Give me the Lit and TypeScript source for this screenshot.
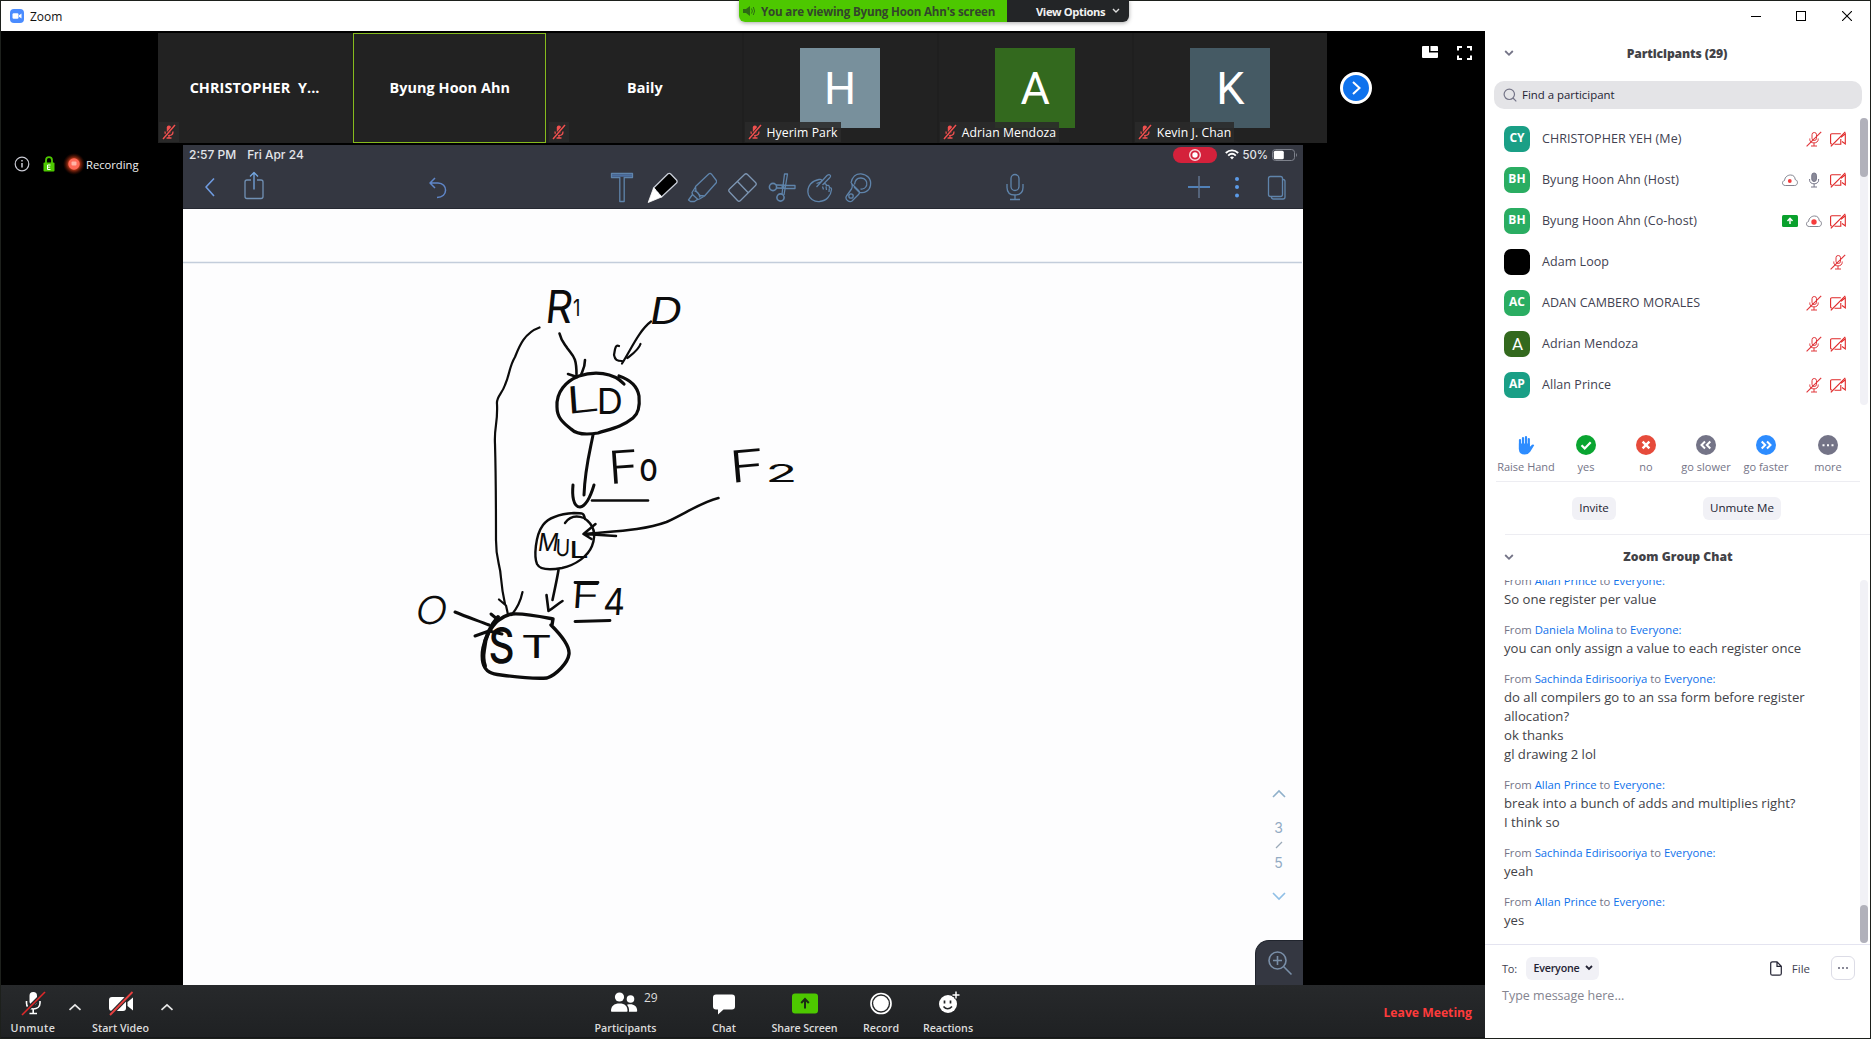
import { LitElement, html, css, svg, nothing } from "lit";
import { customElement } from "lit/decorators.js";

interface Person { name: string; tag: string; color: string; icons: string[]; plain?: boolean }
interface Message { from: string; lines: string[] }
interface Tile { label?: string; letter?: string; name?: string; color?: string; muted: boolean; active?: boolean }

const TILES: Tile[] = [
  { label: "CHRISTOPHER  Y...", muted: true },
  { label: "Byung Hoon Ahn", muted: false, active: true },
  { label: "Baily", muted: true },
  { letter: "H", name: "Hyerim Park", color: "slate", muted: true },
  { letter: "A", name: "Adrian Mendoza", color: "forest", muted: true },
  { letter: "K", name: "Kevin J. Chan", color: "steel", muted: true },
];

const PEOPLE: Person[] = [
  { name: "CHRISTOPHER YEH (Me)", tag: "CY", color: "teal", icons: ["mic", "cam"] },
  { name: "Byung Hoon Ahn (Host)", tag: "BH", color: "green", icons: ["cloud", "micOn", "cam"] },
  { name: "Byung Hoon Ahn (Co-host)", tag: "BH", color: "green", icons: ["share", "cloudBig", "cam"] },
  { name: "Adam Loop", tag: "", color: "black", icons: ["mic"] },
  { name: "ADAN CAMBERO MORALES", tag: "AC", color: "green", icons: ["mic", "cam"] },
  { name: "Adrian Mendoza", tag: "A", color: "forest", icons: ["mic", "cam"], plain: true },
  { name: "Allan Prince", tag: "AP", color: "teal", icons: ["mic", "cam"] },
];

const MESSAGES: Message[] = [
  { from: "Allan Prince", lines: ["So one register per value"] },
  { from: "Daniela Molina", lines: ["you can only assign a value to each register once"] },
  { from: "Sachinda Edirisooriya", lines: ["do all compilers go to an ssa form before register", "allocation?", "ok thanks", "gl drawing 2 lol"] },
  { from: "Allan Prince", lines: ["break into a bunch of adds and multiplies right?", "I think so"] },
  { from: "Sachinda Edirisooriya", lines: ["yeah"] },
  { from: "Allan Prince", lines: ["yes"] },
];

const icon16 = (body: unknown) => html`<svg width="16" height="16" viewBox="0 0 16 16" fill="none">${body}</svg>`;

const STATUS: Record<string, unknown> = {
  mic: icon16(svg`<g stroke="#e0363b" stroke-width="1"><rect x="6" y="1.5" width="4.5" height="8" rx="2.2"/><path d="M3.800 7.500v1c0 2 1.800 3.400 4.200 3.400s4.200-1.400 4.200-3.400v-1M8 12v3M5 15h6"/><path d="M.6 15.400 15.200.8" stroke-width="1.200"/></g>`),
  micOn: icon16(svg`<g stroke="#747487" stroke-width="1"><rect x="5.800" y="1" width="4.600" height="8.500" rx="2.300" fill="#8a8a98"/><path d="M3.600 7v1.200c0 2.200 1.900 3.600 4.500 3.600s4.500-1.400 4.500-3.600V7M8.100 12v3M5 15h6"/></g>`),
  cam: icon16(svg`<g stroke="#e02828" stroke-width="1.100"><path d="M10.800 2.800H1.800Q.6 2.800.6 4v8q0 1 1 1h.5M4.500 13.200h6.300V8M11 6.300l4.300-3.500v10.200L12 10.500"/><path d="M.8 15.400 15.300.8" stroke-width="1.200"/></g>`),
  cloud: icon16(svg`<path d="M3.300 13.500C-.4 13.500-.2 9 2.500 8.500 3 4.500 6 3 8.700 3c2.800 0 4.400 2 4.500 4.600 3.200.6 2.900 5.900-.5 5.900z" stroke="#84848f"/><circle cx="7.800" cy="9" r="1.900" fill="#f53b3b"/>`),
  cloudBig: icon16(svg`<path d="M3.300 13.500C-.4 13.500-.2 9 2.500 8.500 3 4.500 6 3 8.700 3c2.800 0 4.400 2 4.500 4.600 3.200.6 2.900 5.900-.5 5.900z" stroke="#84848f"/><circle cx="8" cy="9" r="2.700" fill="#f53b3b"/>`),
  share: icon16(svg`<rect y="2" width="16" height="12" rx="1.500" fill="#0aa12d"/><path d="M8 11V5.500M5.500 8 8 5.300 10.500 8" stroke="#fff" stroke-width="1.500"/>`),
};

const redMic = html`<svg width="14" height="16" viewBox="0 0 14 16" fill="none"><rect x="4.800" y="1.500" width="4.200" height="8" rx="2" fill="#f0504f"/><path d="M3 7.500c0 2.600 1.600 4 4 4s4-1.400 4-4M7 11.500V14M4.500 14h5" stroke="#f0504f" stroke-width="1.300"/><path d="M1 15 13 1" stroke="#262626" stroke-width="3"/><path d="M1 15 13 1" stroke="#f0504f" stroke-width="1.500"/></svg>`;

const chevron = html`<svg width="10" height="8" viewBox="0 0 10 8" fill="none"><path d="M1.200 2 5 5.800 8.800 2" stroke="#747487" stroke-width="1.800"/></svg>`;

const tool = (body: unknown) => html`<svg width="32" height="32" viewBox="0 0 32 32" fill="none" stroke="#5f84ab" stroke-width="1.300" stroke-linejoin="round">${body}</svg>`;

const TOOLS = {
  back: tool(svg`<path d="M20 7.500 12 16l8 9" stroke="#6f9be0" stroke-width="1.600"/>`),
  share: tool(svg`<path d="M13 9H9q-2 0-2 2v14.500q0 2 2 2h14q2 0 2-2V11q0-2-2-2h-4" stroke="#7090b4"/><path d="M16 18.500V2M12 5.500l4-4 4 4" stroke="#74a6e0"/>`),
  undo: tool(svg`<path d="M13 7 8 12l5 5M8.500 12h7.500c10 0 10.500 14.500-1 14.500" stroke="#5f86c8" stroke-width="1.500"/>`),
  text: tool(svg`<path d="M5.500 2.500h21v4h-8.300v24h-4.400v-24H5.500z"/><path d="M6 4.500h20" stroke="#4d6fa0" stroke-width="2.500"/>`),
  pen: tool(svg`<path d="M22 2.800 7.500 17l8 9 15-14q1.200-1.500 0-3L25 3.200q-1.500-1.500-3-.4z" fill="#000" stroke="#c9ced8"/><path d="M7.500 17 2.200 31.500 15.500 26q-1-2.500-3-2.500.3-2.500-2.500-3-.200-3-2.500-3.500z" fill="#fff" stroke="#fff" stroke-width=".8"/>`),
  marker: tool(svg`<path d="M24 2.800 10.500 15.500l.5 4.500 4 4.500 4.500.5L31 12q1.200-1.500 0-3l-4.500-5.800q-1.500-1.500-2.500-.4zM10.500 16 7 21.500l.5 2 5.500 5 1.500-.5 5-3M7.500 23.500 3.500 29l2 1.500h4l3.500-2.500M9.500 20q4 .5 5.500 6.500"/>`),
  eraser: tool(svg`<path d="M19.500 3.500q1.500-1.500 3 0l8 8q1.500 1.500 0 3L15.500 29.500q-1.500 1.500-3 0l-8-8.500q-1.500-1.500 0-3zM12.500 10.500 23.500 22" stroke="#7d96b3"/>`),
  scissors: tool(svg`<g transform="translate(2.500 0)"><circle cx="6.500" cy="16" r="3.600" stroke-width="1.600"/><circle cx="14" cy="26.500" r="3.600" stroke-width="1.600"/><path d="m9.500 14 19 .5v3l-19-.5M15.500 23l2.500-20h3L17.500 24"/><circle cx="16.500" cy="16" r="1"/></g>`),
  hand: tool(svg`<path d="M12.500 16 23 4.500q2.500-2 3.500.2.300 1-.8 2L18.500 14M19 13.500q1.800-1.700 3.200.2l.3 1q2-1 2.800.8l.2 1.200q2-.2 2 1.800-.5 5-3.500 8-3 3.500-8.500 4-8 .5-11-6.500-2-6 2-11Q9.500 9.500 15 8.500q3-.5 2.500 1.500-.5 1-5 2.500M18.500 15.500l1 3M22 15.500l.5 3.500M25.300 17.500 25 21"/>`),
  lasso: tool(svg`<path d="M8 12C9 6 13 2.500 18 2.800c6 .5 10.500 5 9.500 11.500-1 5.500-6 8.500-11.500 7M11.500 13.500C12 9.500 14.500 6.800 18 7c4.500.3 6.500 3.500 5.700 7-.8 3-3.500 4.500-6.200 3.800"/><path d="m8.500 12.500 7 7q2 2 0 4L9 30q-2 1.500-4.500-.5t-1-4.500l5-7q1.500-3 0-5.500z"/><circle cx="8" cy="25" r="2.200"/><path d="m11 16 5 5"/>`),
  mic: tool(svg`<rect x="12" y="3.500" width="8" height="16" rx="4"/><path d="M8 13v3.500c0 5 3 7.500 8 7.500s8-2.500 8-7.500V13M16 24v4.500M11 28.500h10"/>`),
  plus: tool(svg`<path d="M5 16h22" stroke="#5b9be0" stroke-width="1.500"/><path d="M16 5v22" stroke="#61748f" stroke-width="1.500"/>`),
  dots: tool(svg`<g fill="#5b9be8" stroke="none"><circle cx="16" cy="8" r="2"/><circle cx="16" cy="16" r="2"/><circle cx="16" cy="24.500" r="2"/></g>`),
  pages: tool(svg`<rect x="9.500" y="5.500" width="14" height="20" rx="2"/><path d="M24 8.500q2 0 2 2V26q0 2-2 2h-9.500q-2 0-2-2"/>`),
};

const caret = html`<svg width="14" height="8" viewBox="0 0 14 8" fill="none"><path d="M1.500 6.800 7 1.800l5.500 5" stroke="#e8e8e8" stroke-width="1.700"/></svg>`;

/* Drawn width and left bearing of each character, in em. */
const METRICS: Record<string, [number, number]> = {
  R: [0.5, 0.09], "1": [0.22, 0.06], D: [0.58, 0.09], L: [0.43, 0.09], F: [0.44, 0.09], "0": [0.52, 0.06], "2": [0.5, 0.05],
  M: [0.7, 0.09], U: [0.56, 0.09], "4": [0.56, 0.04], S: [0.52, 0.06], T: [0.56, 0.04], O: [0.66, 0.06],
};

/* One hand-written character, scaled to the box x, y, w, h on the canvas. */
const ink = (ch: string, x: number, y: number, w: number, h: number, tilt = 0, weight = 300, turn = 0) => {
  const size = h / 0.727;
  const [em, bearing] = METRICS[ch];
  const k = w / (em * size);
  return svg`<text class="ink" font-weight=${weight} font-size=${size.toFixed(1)}
    transform="translate(${(x - bearing * size * k).toFixed(1)} ${y + h}) rotate(${turn}) skewX(${-tilt}) scale(${k.toFixed(3)} 1)">${ch}</text>`;
};

@customElement("app-root")
export class AppRoot extends LitElement {
  static styles = css`
    :host { display: block; width: 1871px; height: 1039px; font-family: "Open Sans", "Noto Sans", sans-serif; color: #424251; overflow: hidden; }
    * { box-sizing: border-box; }
    svg { display: block; flex: none; }
    .window { position: relative; width: 1871px; height: 1039px; border: 1px solid #1d201c; background: #fff; display: flex; flex-direction: column; }
    .title { height: 30px; display: flex; align-items: center; padding-left: 9px; flex: none; }
    .title .name { margin-left: 6px; font-size: 12px; color: #111; flex: 1; }
    .controls { display: flex; gap: 36px; margin-right: 18px; }
    .min { margin-right: -1px; }
    .banner { position: absolute; left: 738px; top: -1px; display: flex; height: 22px; font-weight: 700; box-shadow: 0 1px 4px rgba(0,0,0,.35); border-radius: 0 0 6px 6px; overflow: hidden; line-height: 21px; white-space: nowrap; }
    .viewing { width: 268px; background: #4dc800; color: #33452c; display: flex; align-items: center; padding-left: 4px; gap: 6px; font-size: 11.600px; letter-spacing: -0.180px; }
    .options { width: 122px; background: #232527; color: #f2f2f2; display: flex; align-items: center; padding-left: 29px; gap: 7px; font-size: 11.200px; letter-spacing: -0.400px; }
    .main { display: flex; flex: 1; min-height: 0; }
    .meeting { width: 1484px; background: #000; display: flex; flex-direction: column; }
    .strip { height: 114px; padding: 2px 0 2px 157px; display: flex; flex: none; }
    .tiles { width: 1169px; display: grid; grid-template-columns: repeat(6, 1fr); gap: 2px; background: #1f1f1f; }
    .tile { position: relative; background: #222; display: flex; align-items: center; justify-content: center; height: 110px; }
    .tile.active { outline: 1px solid #86bb1d; outline-offset: -1px; }
    .label { color: #fff; font-size: 14.400px; letter-spacing: .08px; font-weight: 700; white-space: pre; margin-bottom: 1px; }
    .pic { width: 80px; height: 80px; display: flex; align-items: center; justify-content: center; color: #fff; font-family: Roboto, sans-serif; font-size: 45px; }
    .slate { background: #78909c; } .forest { background: #33691e; } .steel { background: #455a64; }
    .teal { background: #1a9f86; } .green { background: #2aad62; } .black { background: #000; }
    .nameplate { position: absolute; left: 1px; bottom: 1px; height: 20px; background: rgba(42,42,42,.88); display: flex; align-items: center; padding: 0 3px; gap: 5px; color: #fff; font-size: 12.200px; letter-spacing: .1px; white-space: nowrap; }
    .next { margin: 39px 0 0 13px; width: 32px; height: 32px; border-radius: 50%; border: 3px solid #fff; background: #0e72ed; display: flex; align-items: center; justify-content: center; flex: none; }
    .viewtools { margin: 13px 13px 0 auto; display: flex; gap: 19px; }
    .stage { display: flex; flex: 1; min-height: 0; }
    .info { width: 182px; padding: 8px 0 0 12px; display: flex; height: 30px; align-items: center; color: #f0f0f0; font-size: 11.200px; }
    .lock { margin-left: 12px; }
    .rec { margin: 0 1px 0 8px; }
    .share { width: 1120px; background: #fdfdfe; display: flex; flex-direction: column; }
    .ipad { height: 64px; background: #343741; border-bottom: 1px solid #262932; display: flex; flex-direction: column; color: #e3e5e9; font-family: Inter, sans-serif; flex: none; }
    .status { height: 19px; display: flex; align-items: center; padding: 0 5px 0 6px; font-size: 12px; font-weight: 500; }
    .status .date { margin-left: 11px; flex: 1; }
    .pill { width: 44px; height: 16px; border-radius: 8px; background: #d4213b; display: flex; align-items: center; justify-content: center; margin-right: 8px; }
    .status .pct { margin: 0 4px 0 4px; font-size: 11.300px; }
    .tools { display: flex; height: 44px; align-items: center; padding: 2px 0 0 11px; }
    .undo { margin-left: 152px; }
    .g1 { display: flex; gap: 12px; }
    .g2 { display: flex; gap: 7.500px; margin-left: 152px; }
    .m { margin-left: 124px; }
    .g3 { display: flex; gap: 6px; margin-left: 152px; }
    .canvas { flex: 1; position: relative; display: flex; }
    .sketch { width: 1070px; height: 776px; overflow: visible; }
    .ink { font-family: Inter, "Open Sans", sans-serif; fill: #0c0c0c; }
    .nav { display: flex; flex-direction: column; width: 51px; align-items: center; color: #93abc4; font-family: Inter, sans-serif; font-size: 14px; line-height: 18px; padding: 580px 0 0 1px; }
    .slash { margin: 4px 0 5px; }
    .up { margin-bottom: 21px; }
    .down { margin-top: 20px; }
    .magnify { position: absolute; right: 0; bottom: 0; width: 48px; height: 45px; border-radius: 14px 0 0 0; background: #343741; border: 1px solid #20242d; border-width: 1px 0 0 1px; padding: 9px 0 0 11px; }
    .bar { height: 53px; background: linear-gradient(#27292b, #1f2123); display: flex; flex: none; color: #dcdcdc; font-size: 10.700px; font-weight: 600; border-bottom: 1px solid #16171a; }
    .btn { display: flex; flex-direction: column; align-items: center; white-space: nowrap; padding-top: 5px; }
    .btn svg { height: 28px; }
    .btn span { line-height: 16px; margin-top: 2px; }
    .w64 { width: 64px; letter-spacing: .45px; } .w71 { width: 71px; } .w80 { width: 80px; } .w60 { width: 60px; } .w50 { width: 50px; }
    .caret { padding-top: 18px; width: 20px; padding-left: 3px; }
    .caret.b { width: 22px; padding-left: 4px; }
    .p { margin-left: 407.500px; } .c { margin-left: 28.500px; } .s { margin-left: 10.500px; letter-spacing: -.12px; } .r { margin-left: 11.500px; } .x { margin-left: 12px; }
    .count { position: relative; margin-right: 3px; }
    .num { position: absolute; left: 34px; top: -1px; font-size: 12px; font-weight: 400; }
    .leave { margin-left: auto; padding-right: 13px; color: #ff3b3b; font-size: 12.200px; font-weight: 700; line-height: 56px; }
    .side { flex: 1; display: flex; flex-direction: column; color: #424251; }
    .head { display: flex; align-items: center; height: 44px; padding: 0 19px; font-size: 12.200px; letter-spacing: -.13px; font-weight: 700; flex: none; color: #424247; }
    .head b { flex: 1; text-align: center; margin-right: 11px; }
    .search { margin: 6px 8px 0 9px; height: 28px; border-radius: 10px; background: #e4e4e7; display: flex; align-items: center; padding: 0 0 1px 9px; gap: 5px; font-size: 11.400px; color: #232333; flex: none; }
    .people { margin-top: 9px; height: 287px; display: flex; flex: none; }
    .rows { flex: 1; }
    .row { height: 41px; display: flex; align-items: center; padding-left: 19px; font-size: 12.500px; letter-spacing: .05px; white-space: nowrap; }
    .pname { margin-bottom: 1px; }
    .ava { width: 26px; height: 26px; border-radius: 7px; color: #fff; font-weight: 700; font-size: 12px; line-height: 1; padding-bottom: 1px; display: flex; align-items: center; justify-content: center; margin-right: 12px; flex: none; }
    .ava.plain { font-weight: 400; font-size: 17px; font-family: Roboto, sans-serif; padding: 2px 0 0 1px; }
    .icons { margin-left: auto; display: flex; gap: 8px; padding-right: 14px; }
    .track { width: 8px; border-radius: 4px; background: #f1f1f6; margin-right: 2px; display: flex; height: 287px; }
    .track.full { height: 363px; }
    .thumb { width: 8px; border-radius: 4px; background: #b1b1bb; }
    .t1 { height: 59px; } .t2 { height: 38px; align-self: flex-end; }
    .feedback { margin: 30px 10px 0 11px; height: 47px; display: flex; border-bottom: 1px solid #ededf2; font-size: 11px; color: #747487; flex: none; }
    .fb { width: 60px; display: flex; flex-direction: column; align-items: center; gap: 4px; white-space: nowrap; line-height: 16px; }
    .fb.more { width: 64px; }
    .acts { display: flex; height: 53px; padding: 15px 0 0 67px; margin-left: 20px; gap: 87px; border-bottom: 1px solid #ededf2; flex: none; }
    .chip { height: 23px; border-radius: 6px; background: #f1f1f6; color: #232333; font-size: 11.600px; line-height: 21px; text-align: center; }
    .inv { width: 44px; } .unm { width: 78px; }
    .head.chat { height: 45px; letter-spacing: 0; padding-bottom: 2px; }
    .head.chat b { margin-right: 9px; }
    .chatbox { height: 363px; display: flex; flex: none; overflow: hidden; }
    .log { flex: 1; height: 363px; display: flex; flex-direction: column; justify-content: flex-end; padding: 0 20px 13px 19px; gap: 11px; white-space: nowrap; }
    .msg { line-height: 19px; font-size: 13.150px; color: #424247; flex: none; }
    .from { font-size: 11.300px; color: #747487; }
    .who-link { color: #0e71eb; }
    .compose { border-top: 1px solid #e4e4f0; margin-top: 1px; flex: 1; padding: 11px 15px 0 17px; font-size: 11.500px; }
    .cline { display: flex; align-items: center; height: 24px; }
    .to { font-size: 11px; letter-spacing: -.2px; }
    .who { margin-left: 9.500px; width: 73px; height: 23px; border-radius: 6px; background: #f1f1f6; font-weight: 600; color: #232333; padding-left: 7px; display: flex; align-items: center; gap: 5px; font-size: 10.700px; letter-spacing: -.2px; }
    .file { margin-left: auto; margin-right: 10px; }
    .dots { margin-left: 21px; width: 24px; height: 24px; border: 1px solid #dcdce6; border-radius: 6px; display: flex; align-items: center; justify-content: center; }
    .ph { color: #84848f; font-size: 12.500px; margin-top: 6px; line-height: 19px; }
  `;

  private tile(t: Tile) {
    return html`<div class="tile ${t.active ? "active" : ""}">
      ${t.label ? html`<span class="label">${t.label}</span>` : html`<div class="pic ${t.color}">${t.letter}</div>`}
      ${t.muted ? html`<div class="nameplate">${redMic}${t.name ? html`<span>${t.name}</span>` : nothing}</div>` : nothing}
    </div>`;
  }

  private sketch() {
    return html`<svg class="sketch" viewBox="183 209 1070 776" fill="none" stroke="#0c0c0c" stroke-width="2.200" stroke-linecap="round" stroke-linejoin="round">
      <path d="M183 262.500H1302" stroke="#c3cddb" stroke-width="1.700" stroke-linecap="butt"/>
      <g stroke="none">
        ${ink("R", 548, 290, 21, 33, 6, 400)}${ink("1", 574, 299, 4, 17, 0, 400)}
        ${ink("D", 652, 297, 26, 27, 10, 400)}
        ${ink("L", 572, 387, 26, 27, 2, 300, -6)}${ink("D", 600, 388, 21, 26, 0, 400)}
        ${ink("F", 614, 451, 23, 33, 0, 300, -4)}${ink("0", 641, 459, 15, 22, 0, 500)}
        ${ink("F", 736, 451, 27, 32, 0, 300, -5)}${ink("2", 768, 464, 26, 18, 0, 400)}
        ${ink("M", 539, 533, 16, 18, 8, 400)}${ink("U", 557, 539, 11, 17, 2, 400)}${ink("L", 572, 541, 15, 17, 0, 400)}
        ${ink("F", 575, 583, 22, 25, 4)}${ink("4", 604, 588, 19, 27, 4, 400)}
        ${ink("S", 491, 627, 21, 36, 0, 500)}${ink("T", 523, 635, 27, 23, 0, 400)}
        ${ink("O", 416, 596, 28, 28, 10)}
      </g>
      <path d="M539.500 327.500C524 333 519 347 515 357c-6 10-5 17-10 28-3 9-9 12-8 19 1 20-3 22-2 40 1 35 1 66 1 96 0 22 4 22 5 38 1 12 2 17 4 26M499 599.500l7 6 2 9M522.500 592c-2 10-6 17-11 23"/>
      <path d="M559.500 333.500c2 8 4 9 8 15 6 8 9 9 9 26M568 374l9 3M585 360c0 7-2 10-4 15" stroke-width="2.600"/>
      <path d="M651 321.500c-12 9-20 28-29 42M619 346c-4-2-4 4-5 9 1 5 3 6 8 6M640.500 344c-2 6-8 10-13 14"/>
      <path d="M619 376c9 3 18 8 20 20 1 10-1 18-6 22-11 9-23 11-35 15-12 2-22 1-27-4-9-7-14-12-14-22-1-15 9-26 22-31 15-5 34-4 45 8" stroke-width="3.200"/>
      <path d="M593 435c-3 16-8 33-9 60M573 485c-1 10 0 22 7 22 7-1 11-12 14-22" stroke-width="3"/>
      <path d="M592 500.500h56" stroke-width="2.600"/>
      <path d="M718.500 498c-17 4-34 16-52 24-22 8-48 9-80 12M584 534l32 2M595.500 524l-12 10 8 5" stroke-width="2.500"/>
      <path d="M585 519c-1-6-2-6-11-6-15 1-25 4-31 12-8 11-9 32-6 39 3 6 14 6 25 4 14-3 26-12 30-22 5-13 1-22-8-28-8-3-14-2-19 5" stroke-width="2.400"/>
      <path d="M558.500 570c-2 12-4 20-6 30M546.500 595l2 16c5-3 9-7 14-10" stroke-width="2.600"/>
      <path d="M575 582.500h23M575 621.500l35-1" stroke-width="2.800"/>
      <path d="M455 612c12 5 24 9 34 13M491 614l6 5M475 636l14-5 13 3" stroke-width="3"/>
      <path d="M552 625l1-6c-15-3-29-6-41-5-12 2-18 10-23 18-6 10-8 22-6 31 2 9 9 11 18 12 15 2 29 4 46 3 9-3 21-15 22-24 1-9-10-21-18-29" stroke-width="3.400"/>
      <path d="M498 617c-7 8-13 20-14 33-1 6-1 11 1 16" stroke-width="4"/>
    </svg>`;
  }

  render() {
    return html`<div class="window">
      <div class="title">
        <svg width="14" height="14" viewBox="0 0 14 14"><rect width="14" height="14" rx="4" fill="#4a8cff"/><rect x="2.500" y="4.300" width="6" height="5.400" rx="1.200" fill="#fff"/><path d="m9 6.300 2.500-1.800v5L9 7.700z" fill="#fff"/></svg>
        <span class="name">Zoom</span>
        <div class="controls">
          <svg class="min" width="10" height="10" viewBox="0 0 10 10"><path d="M0 5.500h10" stroke="#000"/></svg>
          <svg width="10" height="10" viewBox="0 0 10 10"><rect x=".5" y=".5" width="9" height="9" fill="none" stroke="#000"/></svg>
          <svg width="10" height="10" viewBox="0 0 10 10"><path d="m0 0 10 10M10 0 0 10" stroke="#000" stroke-width="1.100"/></svg>
        </div>
      </div>
      <div class="main">
        <div class="meeting">
          <div class="strip">
            <div class="tiles">${TILES.map((t) => this.tile(t))}</div>
            <div class="next"><svg width="14" height="16" viewBox="0 0 14 16" fill="none"><path d="m4 2 6.500 6L4 14" stroke="#fff" stroke-width="2"/></svg></div>
            <div class="viewtools">
              <svg width="16" height="14" viewBox="0 0 16 14"><path d="M1 0h6v6.500h9V11q0 1-1 1H1q-1 0-1-1V1q0-1 1-1zM8.500 0H15q1 0 1 1v4H8.500z" fill="#fff"/></svg>
              <svg width="15" height="14" viewBox="0 0 15 14" fill="none"><path d="M1 4.500V1h4M10 1h4v3.500M14 9.500V13h-4M5 13H1V9.500" stroke="#fff" stroke-width="2"/></svg>
            </div>
          </div>
          <div class="stage">
            <div class="info">
              <svg width="18" height="18" viewBox="0 0 18 18" fill="none"><circle cx="9" cy="9" r="6.800" stroke="#c9cad3" stroke-width="1.200"/><path d="M9 8v4.500M9 5v1.500" stroke="#c9cad3" stroke-width="1.500"/></svg>
              <svg class="lock" width="12" height="16" viewBox="0 0 12 16"><path d="M3 8V4.200a3 3 0 0 1 6 0V8" fill="none" stroke="#4dc800" stroke-width="1.800"/><rect x=".5" y="6.500" width="11" height="9" rx="1" fill="#4dc800"/><path d="M7.500 9h-3v4.500h3M4.500 11.200h2.700" stroke="#fff" fill="none"/></svg>
              <svg class="rec" width="22" height="22" viewBox="0 0 22 22"><defs><radialGradient id="g"><stop offset=".45" stop-color="#d2401c"/><stop offset="1" stop-color="#5a1200" stop-opacity="0"/></radialGradient></defs><circle cx="11" cy="11" r="11" fill="url(#g)"/><circle cx="11" cy="11" r="5.700" fill="#ff6a58"/><rect x="8.500" y="8.500" width="5" height="4" rx="1" fill="#ffb4a6"/></svg>
              <span>Recording</span>
            </div>
            <div class="share">
              <div class="ipad">
                <div class="status"><span>2:57 PM</span><span class="date">Fri Apr 24</span>
                  <div class="pill"><svg width="14" height="14" viewBox="0 0 14 14"><circle cx="7" cy="7" r="5.300" fill="none" stroke="#f6d5da" stroke-width="1.400"/><circle cx="7" cy="7" r="2.700" fill="#fff"/></svg></div>
                  <svg width="14" height="11" viewBox="0 0 14 11" fill="none" stroke="#fff" stroke-width="1.900"><path d="M.8 4C4.500.5 9.500.5 13.200 4M3.200 6.600c2.300-2.100 5.300-2.100 7.600 0"/><path d="m7 10.500-2-2.300q2-1.500 4 0z" fill="#fff" stroke="none"/></svg>
                  <span class="pct">50%</span>
                  <svg width="26" height="12" viewBox="0 0 26 12"><rect x=".5" y=".5" width="22" height="11" rx="3" fill="none" stroke="#7e828c"/><rect x="1.800" y="1.800" width="10" height="8.400" rx="1.500" fill="#fff"/><path d="M24 4q2 2 0 4z" fill="#7e828c"/></svg>
                </div>
                <div class="tools">
                  <div class="g1">${TOOLS.back}${TOOLS.share}</div><div class="undo">${TOOLS.undo}</div>
                  <div class="g2">${TOOLS.text}${TOOLS.pen}${TOOLS.marker}${TOOLS.eraser}${TOOLS.scissors}${TOOLS.hand}${TOOLS.lasso}</div>
                  <div class="m">${TOOLS.mic}</div>
                  <div class="g3">${TOOLS.plus}${TOOLS.dots}${TOOLS.pages}</div>
                </div>
              </div>
              <div class="canvas">
                ${this.sketch()}
                <div class="nav">
                  <svg class="up" width="14" height="9" viewBox="0 0 14 9" fill="none"><path d="m1 8 6-6 6 6" stroke="#8fb0ca" stroke-width="1.600"/></svg>
                  <span>3</span>
                  <svg class="slash" width="8" height="8" viewBox="0 0 8 8"><path d="M1 7 7 1" stroke="#9aa9b8" stroke-width="1.300"/></svg>
                  <span>5</span>
                  <svg class="down" width="14" height="9" viewBox="0 0 14 9" fill="none"><path d="m1 1 6 6 6-6" stroke="#8fbfe6" stroke-width="1.600"/></svg>
                </div>
                <div class="magnify"><svg width="26" height="26" viewBox="0 0 26 26" fill="none" stroke="#7a8fa8" stroke-width="1.600"><circle cx="10.500" cy="10.500" r="8.500"/><path d="M10.500 6v9M6 10.500h9M16.800 16.800 24.500 24.500"/></svg></div>
              </div>
            </div>
          </div>
          <div class="bar">
            <div class="btn w64"><svg width="26" height="28" viewBox="0 0 26 28" fill="none"><rect x="9.500" y="2" width="7.500" height="13" rx="3.700" fill="#fff"/><path d="M6.500 11v2c0 4 3 6 6.700 6s6.800-2 6.800-6v-2M13.200 19v4M9.500 23.500h7.500" stroke="#fff" stroke-width="1.600"/><path d="M2 25 25 2" stroke="#25272a" stroke-width="4"/><path d="M2 25 25 2" stroke="#e02828" stroke-width="1.600"/></svg><span>Unmute</span></div>
            <div class="caret">${caret}</div>
            <div class="btn w71"><svg width="26" height="28" viewBox="0 0 26 28" fill="none"><rect x="1" y="7" width="17" height="14" rx="3" fill="#fff"/><path d="m19.500 12 5.500-4.500v13L19.500 16z" fill="#fff"/><path d="M2 25 24.500 2" stroke="#25272a" stroke-width="4"/><path d="M2 25 24.500 2" stroke="#e8403f" stroke-width="1.800"/></svg><span>Start Video</span></div>
            <div class="caret b">${caret}</div>
            <div class="btn w80 p"><div class="count"><svg width="28" height="28" viewBox="0 0 28 28" fill="#fff"><circle cx="9.500" cy="7" r="4.600"/><path d="M1 21c0-5 3-7.500 8.500-7.500S17.500 16 17.500 21q0 .8-.8.8H1.800Q1 21.800 1 21z"/><circle cx="20.500" cy="9" r="3.800"/><path d="M19 21.800c.4-3-.5-5.300-2-7 5.500-1.400 10.200.6 10.200 6.200q0 .8-.8.8z"/></svg><div class="num">29</div></div><span>Participants</span></div>
            <div class="btn w60 c"><svg width="24" height="28" viewBox="0 0 24 28" fill="#fff"><path d="M4 4.500h16q3 0 3 3v9q0 3-3 3h-8.500L6 24.500v-5H4q-3 0-3-3v-9q0-3 3-3z"/></svg><span>Chat</span></div>
            <div class="btn w80 s"><svg width="26" height="28" viewBox="0 0 26 28"><rect y="3.500" width="26" height="20" rx="3" fill="#4dc800"/><path d="M13 18.500v-9M9.200 13 13 9l3.800 4" fill="none" stroke="#1b2b14" stroke-width="2"/></svg><span>Share Screen</span></div>
            <div class="btn w50 r"><svg width="24" height="28" viewBox="0 0 24 28"><circle cx="12" cy="13.500" r="10" fill="none" stroke="#fff" stroke-width="1.700"/><circle cx="12" cy="13.500" r="7.800" fill="#fff"/></svg><span>Record</span></div>
            <div class="btn w60 x"><svg width="24" height="28" viewBox="0 0 24 28"><circle cx="12" cy="14" r="9" fill="#fff"/><path d="M8.500 10.500v3M14.500 10.500v3M7.500 16.500q4 4.500 8.500 0" fill="none" stroke="#232527" stroke-width="1.700"/><path d="M20.500 1v8M16.500 5h8" stroke="#232527" stroke-width="4"/><path d="M20 1.500v7M16.500 5h7" stroke="#fff" stroke-width="1.500"/></svg><span>Reactions</span></div>
            <span class="leave">Leave Meeting</span>
          </div>
        </div>
        <div class="side">
          <div class="head">${chevron}<b>Participants (29)</b></div>
          <div class="search"><svg width="14" height="14" viewBox="0 0 14 14" fill="none" stroke="#747487" stroke-width="1.200"><circle cx="6.300" cy="6.300" r="5.200"/><path d="M10 10 13.300 13.300"/></svg><span>Find a participant</span></div>
          <div class="people"><div class="rows">${PEOPLE.map((p) => html`<div class="row"><div class="ava ${p.color} ${p.plain ? "plain" : ""}">${p.tag}</div><span class="pname">${p.name}</span><div class="icons">${p.icons.map((i) => STATUS[i])}</div></div>`)}</div><div class="track"><div class="thumb t1"></div></div></div>
          <div class="feedback">
            <div class="fb"><svg width="20" height="20" viewBox="0 0 20 20"><g stroke="#2d8cff" stroke-width="2.200" stroke-linecap="round"><path d="M4 5v9M7 3v9M10 2v9M12.800 4v9"/></g><path d="M2.900 8.500h10.800V12l2.300-2.200q1.500-.6 2.200.4l-4 6.500q-1.800 2.800-5.500 2.800-5.500 0-5.800-5z" fill="#2d8cff"/></svg><span>Raise Hand</span></div>
            <div class="fb"><svg width="20" height="20" viewBox="0 0 20 20"><circle cx="10" cy="10" r="10" fill="#0aa531"/><path d="m5.500 10.200 3.200 3.200 6-6.200" fill="none" stroke="#fff" stroke-width="2.200"/></svg><span>yes</span></div>
            <div class="fb"><svg width="20" height="20" viewBox="0 0 20 20"><circle cx="10" cy="10" r="10" fill="#e64b3b"/><path d="m6.600 6.600 6.800 6.800M13.400 6.600l-6.800 6.800" stroke="#fff" stroke-width="2.400"/></svg><span>no</span></div>
            <div class="fb"><svg width="20" height="20" viewBox="0 0 20 20"><circle cx="10" cy="10" r="10" fill="#747487"/><path d="M9 6.500 5.500 10 9 13.500M14.300 6.500 10.800 10l3.500 3.500" fill="none" stroke="#fff" stroke-width="2"/></svg><span>go slower</span></div>
            <div class="fb"><svg width="20" height="20" viewBox="0 0 20 20"><circle cx="10" cy="10" r="10" fill="#2d8cff"/><path d="M5.700 6.500 9.200 10l-3.500 3.500M11 6.500l3.500 3.500-3.500 3.500" fill="none" stroke="#fff" stroke-width="2"/></svg><span>go faster</span></div>
            <div class="fb more"><svg width="20" height="20" viewBox="0 0 20 20"><circle cx="10" cy="10" r="10" fill="#747487"/><path d="M4.500 9.200h2v2h-2zM9 9.200h2v2H9zM13.500 9.200h2v2h-2z" fill="#fff"/></svg><span>more</span></div>
          </div>
          <div class="acts"><div class="chip inv">Invite</div><div class="chip unm">Unmute Me</div></div>
          <div class="head chat">${chevron}<b>Zoom Group Chat</b></div>
          <div class="chatbox"><div class="log">${MESSAGES.map((m) => html`<div class="msg"><div class="from">From <span class="who-link">${m.from}</span> to <span class="who-link">Everyone:</span></div>${m.lines.map((l) => html`<div>${l}</div>`)}</div>`)}</div><div class="track full"><div class="thumb t2"></div></div></div>
          <div class="compose">
            <div class="cline"><span class="to">To:</span><div class="who"><span>Everyone</span><svg width="8" height="6" viewBox="0 0 8 6" fill="none"><path d="m1 1 3 3 3-3" stroke="#232333" stroke-width="1.800"/></svg></div>
              <svg class="file" width="12" height="15" viewBox="0 0 12 15" fill="none"><path d="M7 .8H2.500Q.7.800.7 2.600v9.800q0 1.800 1.800 1.800h7q1.800 0 1.800-1.800V5.300zM7 1v4.300h4.300" stroke="#232333" stroke-width="1.200"/></svg><span>File</span>
              <div class="dots"><svg width="12" height="4" viewBox="0 0 12 4" fill="#8a8a98"><path d="M1 1h2v2H1zM5 1h2v2H5zM9 1h2v2H9z"/></svg></div></div>
            <div class="ph">Type message here...</div>
          </div>
        </div>
      </div>
      <div class="banner"><div class="viewing"><svg width="12" height="12" viewBox="0 0 12 12" fill="none"><path d="M0 4h3l4-3v10L3 8H0z" fill="#2d6b14"/><path d="M8.500 3.500q1.800 2.500 0 5M10.300 2q2.600 4 0 8" stroke="#2d6b14"/></svg><span>You are viewing Byung Hoon Ahn's screen</span></div><div class="options"><span>View Options</span><svg width="8" height="6" viewBox="0 0 8 6" fill="none"><path d="m1 1 3 3 3-3" stroke="#ddd" stroke-width="1.400"/></svg></div></div>
    </div>`;
  }
}
